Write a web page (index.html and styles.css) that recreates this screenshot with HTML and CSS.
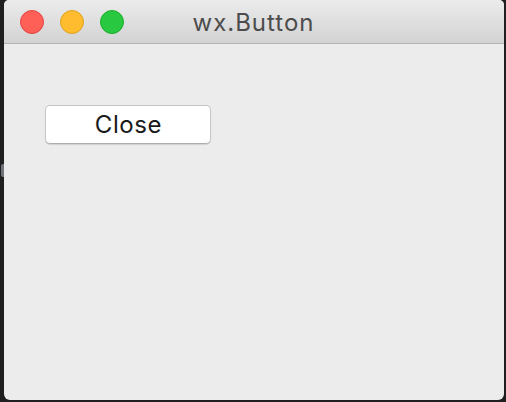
FILE: index.html
```html
<!DOCTYPE html>
<html>
<head>
<meta charset="utf-8">
<link rel="stylesheet" href="styles.css">
</head>
<body>
<div class="desktop">
  <div class="edge"><span class="edge-mark"></span></div>
  <div class="window">
    <div class="titlebar">
      <div class="lights">
        <span class="light red"></span>
        <span class="light yellow"></span>
        <span class="light green"></span>
      </div>
      <div class="title">wx.Button</div>
    </div>
    <div class="content">
      <button class="btn">Close</button>
    </div>
  </div>
</div>
</body>
</html>
```
FILE: styles.css
```css
html, body {
  margin: 0;
  padding: 0;
  background: #1f1f1f;
  width: 506px;
  height: 402px;
  overflow: hidden;
}
.desktop {
  display: flex;
  height: 402px;
}
.edge {
  width: 4px;
  position: relative;
}
.edge-mark {
  position: absolute;
  left: 1px;
  top: 164px;
  width: 3px;
  height: 13px;
  border-radius: 2px 0 0 2px;
  background: #6f747b;
}
.window {
  width: 500px;
  height: 400px;
  background: #ececec;
  border-radius: 5px 5px 6px 6px;
  overflow: hidden;
  display: flex;
  flex-direction: column;
  font-family: "Inter", "Liberation Sans", Arial, sans-serif;
}
.titlebar {
  height: 43px;
  border-bottom: 1px solid #b4b4b4;
  background: linear-gradient(#ebebeb, #d3d3d3);
  position: relative;
  display: flex;
  align-items: center;
  justify-content: center;
}
.lights {
  position: absolute;
  left: 16px;
  top: 10px;
  display: flex;
  gap: 16px;
}
.light {
  width: 24px;
  height: 24px;
  border-radius: 50%;
  box-sizing: border-box;
}
.red { background: #fe5f57; border: 1px solid #e2463f; }
.yellow { background: #febc2e; border: 1px solid #dfa023; }
.green { background: #28c840; border: 1px solid #1dad2b; }
.title {
  font-size: 24px;
  letter-spacing: 1px;
  color: #4c4c4c;
  margin-left: -1px;
  margin-top: 1px;
}
.content {
  flex: 1;
  padding: 61px 0 0 41px;
}
.btn {
  display: block;
  width: 166px;
  height: 39px;
  margin: 0;
  padding: 0 0 0 1px;
  background: #ffffff;
  border: 1px solid #c6c6c6;
  border-bottom-color: #adadad;
  border-radius: 5px;
  box-shadow: 0 1px 1px rgba(0,0,0,0.12);
  font-family: "Inter", "Liberation Sans", Arial, sans-serif;
  font-size: 24px;
  letter-spacing: 0.6px;
  color: #1a1a1a;
  line-height: 37px;
}
```
